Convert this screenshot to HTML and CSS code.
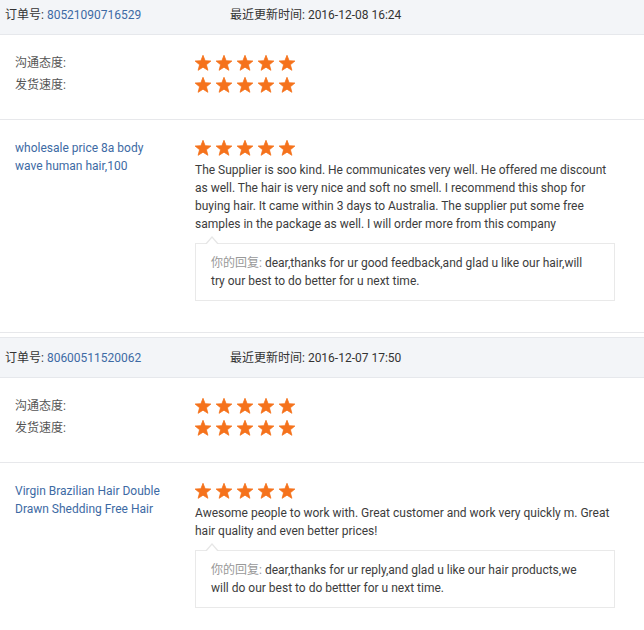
FILE: index.html
```html
<!DOCTYPE html>
<html lang="zh">
<head>
<meta charset="utf-8">
<link rel="stylesheet" href="styles.css">
</head>
<body>
<svg class="defs" width="0" height="0" aria-hidden="true">
  <symbol id="star" viewBox="0 0 16 16">
    <polygon points="8,0.3 10.12,5.69 15.89,6.04 11.42,9.71 12.88,15.31 8,12.2 3.12,15.31 4.58,9.71 0.11,6.04 5.88,5.69" fill="#f5721c" stroke="#f5721c" stroke-width="0.8" stroke-linejoin="round"/>
  </symbol>
</svg>
<div class="list">
  <div class="order">
    <div class="order-head">
      <div class="order-no">订单号: <a class="link">80521090716529</a></div>
      <div class="order-time">最近更新时间: 2016-12-08 16:24</div>
    </div>
    <div class="ratings">
      <div class="label">沟通态度:</div>
      <div class="stars"><svg class="star"><use href="#star"/></svg><svg class="star"><use href="#star"/></svg><svg class="star"><use href="#star"/></svg><svg class="star"><use href="#star"/></svg><svg class="star"><use href="#star"/></svg></div>
      <div class="label">发货速度:</div>
      <div class="stars"><svg class="star"><use href="#star"/></svg><svg class="star"><use href="#star"/></svg><svg class="star"><use href="#star"/></svg><svg class="star"><use href="#star"/></svg><svg class="star"><use href="#star"/></svg></div>
    </div>
    <div class="product">
      <div class="product-name"><a class="link">wholesale price 8a body wave human hair,100</a></div>
      <div class="review">
        <div class="stars"><svg class="star"><use href="#star"/></svg><svg class="star"><use href="#star"/></svg><svg class="star"><use href="#star"/></svg><svg class="star"><use href="#star"/></svg><svg class="star"><use href="#star"/></svg></div>
        <p class="comment">The Supplier is soo kind. He communicates very well. He offered me discount as well. The hair is very nice and soft no smell. I recommend this shop for buying hair. It came within 3 days to Australia. The supplier put some free samples in the package as well. I will order more from this company</p>
        <div class="reply"><span class="reply-label">你的回复:</span> dear,thanks for ur good feedback,and glad u like our hair,will try our best to do better for u next time.</div>
      </div>
    </div>
  </div>
  <div class="order">
    <div class="order-head">
      <div class="order-no">订单号: <a class="link">80600511520062</a></div>
      <div class="order-time">最近更新时间: 2016-12-07 17:50</div>
    </div>
    <div class="ratings">
      <div class="label">沟通态度:</div>
      <div class="stars"><svg class="star"><use href="#star"/></svg><svg class="star"><use href="#star"/></svg><svg class="star"><use href="#star"/></svg><svg class="star"><use href="#star"/></svg><svg class="star"><use href="#star"/></svg></div>
      <div class="label">发货速度:</div>
      <div class="stars"><svg class="star"><use href="#star"/></svg><svg class="star"><use href="#star"/></svg><svg class="star"><use href="#star"/></svg><svg class="star"><use href="#star"/></svg><svg class="star"><use href="#star"/></svg></div>
    </div>
    <div class="product">
      <div class="product-name"><a class="link">Virgin Brazilian Hair Double Drawn Shedding Free Hair</a></div>
      <div class="review">
        <div class="stars"><svg class="star"><use href="#star"/></svg><svg class="star"><use href="#star"/></svg><svg class="star"><use href="#star"/></svg><svg class="star"><use href="#star"/></svg><svg class="star"><use href="#star"/></svg></div>
        <p class="comment">Awesome people to work with. Great customer and work very quickly m. Great hair quality and even better prices!</p>
        <div class="reply"><span class="reply-label">你的回复:</span> dear,thanks for ur reply,and glad u like our hair products,we will do our best to do bettter for u next time.</div>
      </div>
    </div>
  </div>
</div>
</body>
</html>
```
FILE: styles.css
```css
* { box-sizing: border-box; }
html, body { margin: 0; padding: 0; background: #fff; }
body {
  font-family: Roboto, "Noto Sans CJK SC", sans-serif;
  font-size: 12px;
  line-height: 18px;
  color: #3c3c3c;
}
.defs { position: absolute; width: 0; height: 0; overflow: hidden; }
.list { margin-top: -6px; }
.order {
  border-bottom: 1px solid #e7e8eb;
  margin-bottom: 4px;
}
.order-head {
  display: flex;
  align-items: center;
  height: 41px;
  padding-left: 5px;
  background: #f3f5f8;
  border-top: 1px solid #e6e8ec;
  border-bottom: 1px solid #e6e8ec;
  color: #333;
}
.order-no { width: 225px; }
.link { color: #3d6aa4; text-decoration: none; }
.ratings {
  display: grid;
  grid-template-columns: 180px auto;
  grid-auto-rows: 22px;
  align-items: center;
  padding: 17px 0 23px 15px;
  border-bottom: 1px solid #e7e8eb;
  color: #555;
}
.label { line-height: 22px; }
.stars { display: flex; gap: 5px; height: 16px; }
.star { width: 16px; height: 16px; display: block; }
.product {
  display: flex;
  padding: 19px 0 31px 15px;
}
.product-name { width: 180px; padding-right: 25px; }
.review { width: 420px; padding-top: 1px; }
.comment { margin: 5px 0 0; }
.reply {
  position: relative;
  margin-top: 10px;
  border: 1px solid #e9e9e9;
  padding: 10px 20px 10px 15px;
  color: #3c3c3c;
}
.reply::before {
  content: "";
  position: absolute;
  left: 9px;
  top: -8px;
  border: 7px solid transparent;
  border-top: 0;
  border-bottom: 8px solid #e6e6e6;
}
.reply::after {
  content: "";
  position: absolute;
  left: 10px;
  top: -6px;
  border: 6px solid transparent;
  border-top: 0;
  border-bottom: 7px solid #fff;
}
.reply-label { color: #999; }
```
